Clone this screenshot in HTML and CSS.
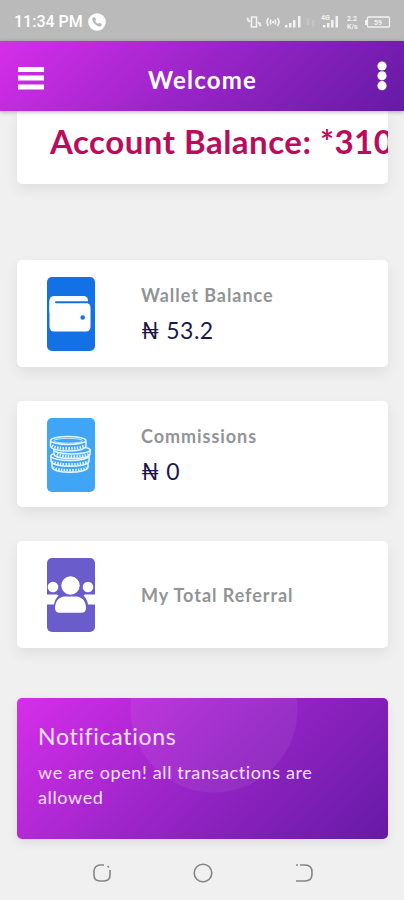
FILE: index.html
```html
<!DOCTYPE html>
<html lang="en">
<head>
  <meta charset="UTF-8">
  <meta name="viewport" content="width=device-width, initial-scale=1.0">
  <title>Welcome</title>
  <link rel="stylesheet" href="styles.css">
</head>
<body>
  <div class="status-bar">
    <span class="time">11:34 PM</span>
    <svg class="call-icon" width="18" height="18" viewBox="0 0 18 18">
      <circle cx="9" cy="9" r="8.8" fill="#fff"/>
      <path d="M5.3 4.4l1.5-.4 1.3 2.5-1 1.2c.7 1.3 1.6 2.3 3 3l1.2-1 2.5 1.4-.4 1.5c-.2.8-1 1.1-1.8 1C8 12.900 5 10 4.300 6.200c-.2-.9.2-1.600 1-1.800z" fill="#b8b8b8"/>
    </svg>
    <svg class="status-icons" width="146" height="18" viewBox="0 0 146 18">
      <g fill="none" stroke="#f2f2f2" stroke-width="1.600">
        <path d="M5.500 4h5v10h-5zM1 5l3 4M2 5v3.500M15 13l-3-4M14 13V9.500"/>
        <path d="M22.500 5q-3 4 0 8M25 6.500q-1.500 2.500 0 5M29 6.500q1.500 2.500 0 5M31.500 5q3 4 0 8"/>
      </g>
      <g fill="#f2f2f2">
        <circle cx="27" cy="9" r="1.200"/>
        <path d="M39 12h2.500v2.500H39zM43 10h2.500v4.500H43zM47 7h2.500v7.500H47zM52 3h2.500v11.500H52zM77 12h2.500v2.500H77zM81 10h2.500v4.500H81zM85 7h2.500v7.500H85zM89.500 3H92v11.500h-2.500z"/>
        <path d="M119 7h2v5h-2z"/>
      </g>
      <path d="M62 5v7l-1.500-1.500M67 14V7l1.500 1.500" fill="none" stroke="#cdcdcd"/>
      <rect x="121.500" y="4" width="22" height="10" rx="1" fill="none" stroke="#f2f2f2" stroke-width="1.300"/>
      <g class="tiny-text">
        <text x="75" y="7">4G</text>
        <text x="101" y="8">2.2</text>
        <text x="101" y="15.500">K/s</text>
        <text x="128" y="12">59</text>
      </g>
    </svg>
  </div>

  <header class="header">
    <svg class="menu-icon" width="26" height="24" viewBox="0 0 26 24">
      <path d="M0 1h26v5H0zM0 9.500h26v5H0zM0 18.500h26v5H0z" fill="#fff"/>
    </svg>
    <h1>Welcome</h1>
    <svg class="dots-icon" width="10" height="30" viewBox="0 0 10 30">
      <g fill="#fff"><circle cx="5" cy="5" r="4.600"/><circle cx="5" cy="14.800" r="4.600"/><circle cx="5" cy="24.700" r="4.600"/></g>
    </svg>
  </header>

  <main class="content">
    <div class="card ticker">Account Balance: *310</div>

    <div class="card stat">
      <svg class="stat-icon" width="48" height="74" viewBox="0 0 48 74">
        <rect width="48" height="74" rx="5" fill="#1271e5"/>
        <rect x="2.500" y="19" width="38.500" height="20" rx="4.500" fill="#fff"/>
        <rect x="2.500" y="26" width="41" height="28.500" rx="4.500" fill="#fff"/>
        <path d="M2.500 23.500h4v10h-4z" fill="#fff"/>
        <path d="M9 25.300h33" stroke="#1271e5" stroke-width="2" stroke-linecap="round"/>
        <circle cx="35.700" cy="40.500" r="2.300" fill="#1271e5"/>
      </svg>
      <div class="stat-text">
        <h2>Wallet Balance</h2>
        <p>₦ 53.2</p>
      </div>
    </div>

    <div class="card stat">
      <svg class="stat-icon" width="48" height="74" viewBox="0 0 48 74">
        <rect width="48" height="74" rx="5" fill="#40a5f5"/>
        <g fill="#40a5f5" stroke="#e4f6ff" stroke-width="1.500">
          <path d="M5 44v5c0 7 36 7 36 0v-5"/>
          <path d="M4 37v6c0 7 38 7 38 0v-6"/>
          <ellipse cx="23" cy="38" rx="19" ry="4.500"/>
          <path d="M7 31v5c0 6 36 6 36 0v-5"/>
          <ellipse cx="25" cy="32" rx="18" ry="4"/>
          <path d="M3.500 23v5c0 6.500 35.500 6.500 35.500 0v-5"/>
          <ellipse cx="21.200" cy="22.500" rx="17.800" ry="4"/>
          <ellipse cx="21.200" cy="22.800" rx="14.500" ry="2.400" stroke-width=".8"/>
        </g>
        <g fill="none" stroke="#e4f6ff" stroke-width="2.800" stroke-dasharray="1.500 1.300">
          <path d="M5 27.500c4 4 28 4 33 0"/>
          <path d="M10 36c6 3.500 26 3.500 32 0"/>
          <path d="M5 43.500c5 4 31 4 36 0"/>
          <path d="M6 49.500c5 4 30 4 34 0"/>
        </g>
      </svg>
      <div class="stat-text">
        <h2>Commissions</h2>
        <p>₦ 0</p>
      </div>
    </div>

    <div class="card stat">
      <svg class="stat-icon" width="48" height="74" viewBox="0 0 48 74">
        <rect width="48" height="74" rx="5" fill="#6a5dcb"/>
        <g fill="#fff">
          <circle cx="6" cy="29" r="5.300"/>
          <circle cx="41" cy="29" r="5.300"/>
          <path d="M0 36.500h9c1 0 2 .5 2.500 1.200C9 40 7.500 43 7 46.500H0zM48 36.500h-9c-1 0-2 .5-2.500 1.200C39 40 40.500 43 41 46.500h7z"/>
          <circle cx="23.500" cy="27.500" r="9.200"/>
          <path d="M18 38.500h11c6 0 10 5 10 11.500 0 3-1.500 4.700-4.500 4.700h-22C9.500 54.700 8 53 8 50c0-6.500 4-11.500 10-11.500z"/>
        </g>
      </svg>
      <div class="stat-text">
        <h2>My Total Referral</h2>
      </div>
    </div>

    <div class="notice">
      <h3>Notifications</h3>
      <p>we are open! all transactions are allowed</p>
    </div>
  </main>

  <nav class="nav-bar">
    <svg width="20" height="20" viewBox="0 0 20 20">
      <path d="M12 2H8a6 6 0 0 0-6 6v4q0 6 6 6h4q6 0 6-6V7M15.500 3l1.500 1.500"/>
    </svg>
    <svg width="20" height="20" viewBox="0 0 20 20">
      <circle cx="10" cy="10" r="8.800"/>
    </svg>
    <svg width="20" height="20" viewBox="0 0 20 20">
      <path d="M2 2h2M6 2h5q7 0 7 7v2q0 7-7 7H2"/>
    </svg>
  </nav>
</body>
</html>
```
FILE: styles.css
```css
* {
  box-sizing: border-box;
}
body {
  margin: 0;
  height: 900px;
  display: flex;
  flex-direction: column;
  overflow: hidden;
  background: #f0f0f0;
  font-family: Lato, sans-serif;
}
h1, h2, h3, p {
  margin: 0;
}
.status-bar {
  height: 41px;
  flex: none;
  display: flex;
  align-items: center;
  padding: 2px 12px 0 14px;
  background: #bababa;
  color: #fff;
}
.time {
  width: 68px;
  font: 500 16px Roboto, sans-serif;
  white-space: nowrap;
}
.call-icon {
  margin-left: 6px;
}
.status-icons {
  margin-left: auto;
}
.tiny-text {
  font: bold 7px Roboto, sans-serif;
  fill: #f2f2f2;
}
.header {
  height: 70px;
  flex: none;
  display: flex;
  align-items: center;
  justify-content: space-between;
  padding: 7px 17px 0 18px;
  background: linear-gradient(135deg, #d62eea 0%, #9824c7 50%, #651aa5 100%);
  box-shadow: 0 1px 4px rgba(0, 0, 0, 0.3);
  color: #fff;
  position: relative;
}
.header h1 {
  font-size: 24px;
  line-height: 30px;
  letter-spacing: 1.2px;
  margin-right: 16px;
}
.menu-icon {
  margin-top: -3px;
}
.dots-icon {
  margin-top: -7px;
}
.content {
  flex: none;
  height: 735px;
  padding: 0 16px 0 17px;
}
.card {
  background: #fff;
  border-radius: 5px;
  box-shadow: 0 6px 14px rgba(0, 0, 0, 0.07);
}
.ticker {
  height: 73px;
  margin-bottom: 76px;
  padding: 9px 0 0 33px;
  border-radius: 0 0 5px 5px;
  overflow: hidden;
  white-space: nowrap;
  color: #bb0b5d;
  font-size: 33px;
  font-weight: 700;
  line-height: 42px;
  letter-spacing: 0.5px;
}
.stat {
  height: 106.5px;
  margin-bottom: 34px;
  display: flex;
  align-items: center;
  padding: 1.5px 0 0 30px;
}
.stat-text {
  margin-left: 46px;
}
.stat h2 {
  color: #919496;
  font-size: 18px;
  font-weight: 700;
  line-height: 24px;
  letter-spacing: 0.95px;
}
.stat p {
  margin-top: 8px;
  color: #1d174b;
  font-size: 23px;
  line-height: 30px;
  letter-spacing: 0.5px;
}
.notice {
  height: 141px;
  margin-top: 50px;
  padding: 23px 50px 0 21px;
  border-radius: 5px;
  background:
    radial-gradient(circle at 197px 11px, rgba(255, 255, 255, 0.06) 83px, transparent 84px),
    linear-gradient(135deg, #d62eea 0%, #9824c7 50%, #651aa5 100%);
  box-shadow: 0 4px 10px rgba(0, 0, 0, 0.08);
  color: #fbe0ff;
}
.notice h3 {
  font-size: 23px;
  font-weight: 400;
  line-height: 30px;
  letter-spacing: 0.7px;
}
.notice p {
  margin-top: 9px;
  font-size: 18px;
  line-height: 25px;
  letter-spacing: 0.62px;
}
.nav-bar {
  flex: 1;
  display: flex;
  justify-content: center;
  gap: 81px;
  padding: 17px 0 0 1px;
}
.nav-bar svg {
  fill: none;
  stroke: #858585;
  stroke-width: 1.6;
}
```
